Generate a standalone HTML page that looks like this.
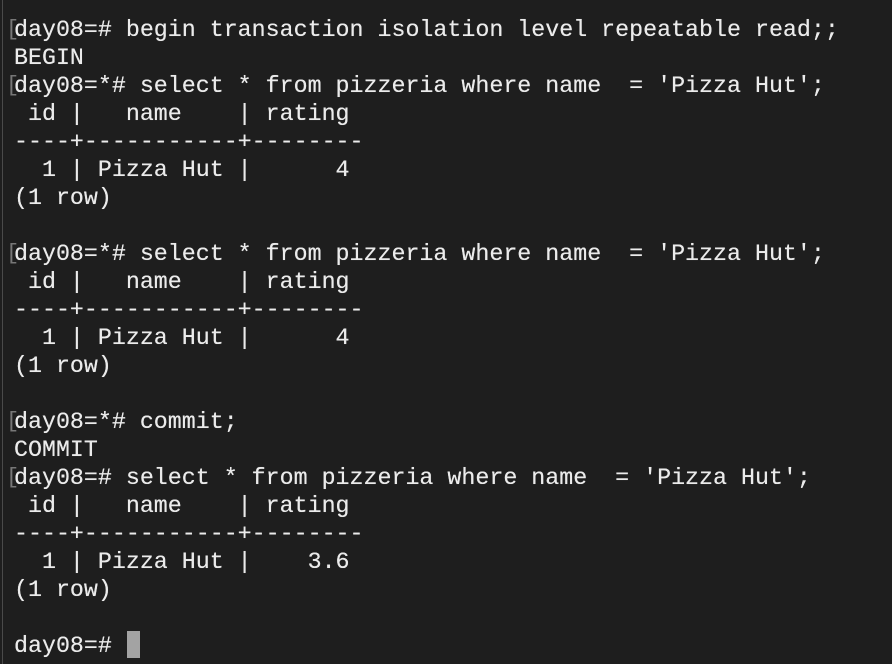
<!DOCTYPE html>
<html><head><meta charset="utf-8"><style>
html,body{margin:0;padding:0;width:892px;height:664px;overflow:hidden;background:#1e1e1e;}
body{position:relative;}
#edge{position:absolute;left:2px;top:0;width:1px;height:664px;background:#4a4a4a;}
pre{position:absolute;left:14px;top:16px;margin:0;font-family:"Liberation Mono",monospace;font-size:23.3px;line-height:28px;color:#ebebeb;white-space:pre;text-shadow:0 0 0.4px #ebebeb;}
.b{position:absolute;left:6px;font-family:"Liberation Mono",monospace;font-size:22px;line-height:28px;color:#777;}
#cur{position:absolute;left:127px;top:631px;width:13px;height:27px;background:#a3a3a3;}
</style></head><body>
<div id="edge"></div>
<div class="b" style="top:16px">[</div>
<div class="b" style="top:72px">[</div>
<div class="b" style="top:240px">[</div>
<div class="b" style="top:408px">[</div>
<div class="b" style="top:464px">[</div>
<pre>day08=# begin transaction isolation level repeatable read;;
BEGIN
day08=*# select * from pizzeria where name  = 'Pizza Hut';
 id |   name    | rating
----+-----------+--------
  1 | Pizza Hut |      4
(1 row)

day08=*# select * from pizzeria where name  = 'Pizza Hut';
 id |   name    | rating
----+-----------+--------
  1 | Pizza Hut |      4
(1 row)

day08=*# commit;
COMMIT
day08=# select * from pizzeria where name  = 'Pizza Hut';
 id |   name    | rating
----+-----------+--------
  1 | Pizza Hut |    3.6
(1 row)

day08=# </pre>
<div id="cur"></div>
</body></html>
